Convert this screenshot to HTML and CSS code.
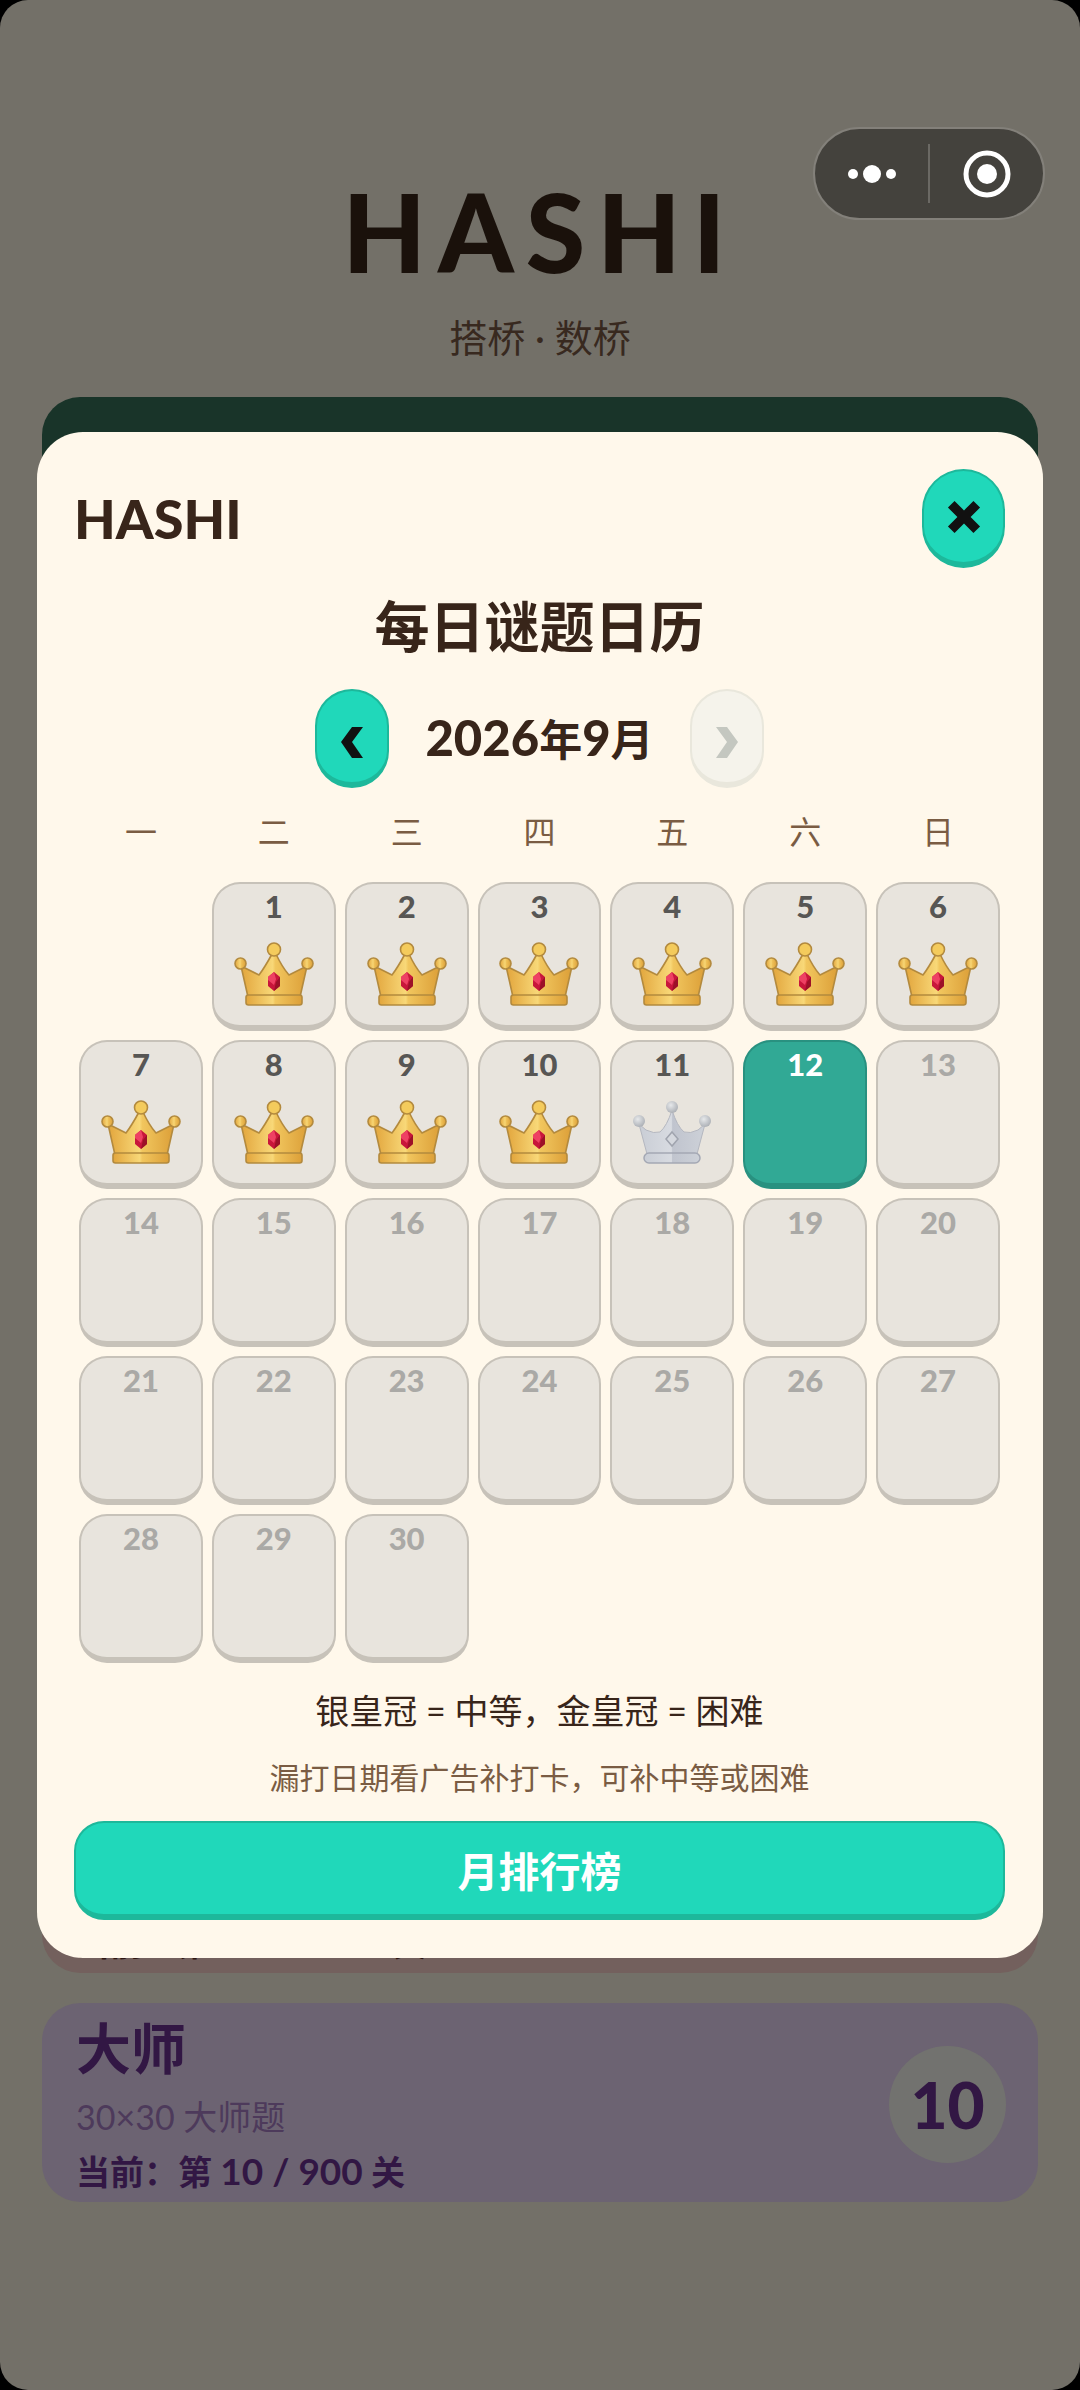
FILE: index.html
```
<!DOCTYPE html>
<html lang="zh-CN">
<head>
	<meta charset="UTF-8">
	<title>HASHI</title>
	<link rel="stylesheet" href="styles.css">
</head>
<body>
	<svg class="defs" width="0" height="0" aria-hidden="true">
		<defs>
			<linearGradient id="gold" x1="0" x2="1" y1="0" y2="0">
				<stop offset="0" stop-color="#e2a53c"/>
				<stop offset="0.48" stop-color="#f8d878"/>
				<stop offset="0.52" stop-color="#f1c65e"/>
				<stop offset="1" stop-color="#dc9f38"/>
			</linearGradient>
			<linearGradient id="silver" x1="0" x2="1" y1="0" y2="0">
				<stop offset="0" stop-color="#c9cdd5"/>
				<stop offset="0.49" stop-color="#d8dbe1"/>
				<stop offset="0.51" stop-color="#c0c4ce"/>
				<stop offset="1" stop-color="#cdd1d8"/>
			</linearGradient>
			<radialGradient id="pearl" cx="0.4" cy="0.35" r="0.7">
				<stop offset="0" stop-color="#e6e8ea"/>
				<stop offset="1" stop-color="#a9adb3"/>
			</radialGradient>
			<symbol id="crown-gold" viewBox="0 0 80 64">
				<g fill="url(#gold)" stroke="#b38a3e" stroke-width="1.6" stroke-linejoin="round">
					<path d="M7 24 L25 33 Q31 25 38 12 L42 12 Q48 25 55 33 L73 24 L66 55 L14 55 Z"/>
					<circle cx="6.5" cy="21.5" r="5.5"/>
					<circle cx="73.5" cy="21.5" r="5.5"/>
					<rect x="12" y="53" width="56" height="10" rx="2.5"/>
				</g>
				<circle cx="40" cy="7.5" r="6.5" fill="#f4cb5c" stroke="#b38a3e" stroke-width="1.6"/>
				<path d="M40 30 L46 35 L46 44 L40 49 L34 44 L34 35 Z" fill="#c8163b"/>
				<path d="M40 30 L42 37 L40 43 L34 38 L34 35 Z" fill="#ee4163"/>
				<path d="M46 35 L46 44 L40 49 L42 40 Z" fill="#9c1128"/>
			</symbol>
			<symbol id="crown-silver" viewBox="0 0 80 64">
				<path d="M7 24 L14 30 Q22 34 28 32 Q35 26 40 10 Q45 26 52 32 Q58 34 66 30 L73 24 L65 54 L15 54 Z" fill="url(#silver)" stroke="#b4b7c0" stroke-width="1"/>
				<rect x="12" y="53" width="56" height="10" rx="5" fill="url(#silver)" stroke="#a4a8b4" stroke-width="1.5"/>
				<circle cx="7" cy="21" r="6" fill="url(#pearl)"/>
				<circle cx="73" cy="21" r="6" fill="url(#pearl)"/>
				<circle cx="40" cy="7" r="6" fill="url(#pearl)"/>
				<path d="M40 32 L46 39 L40 46 L34 39 Z" fill="#d5d8de" stroke="#a0a4ae" stroke-width="1.5"/>
			</symbol>
		</defs>
	</svg>

	<div class="app">
		<div class="capsule">
			<button class="capsule-btn" aria-label="更多">
				<svg width="50" height="20" viewBox="0 0 50 20"><circle cx="6" cy="10" r="5"/><circle cx="25" cy="10" r="9"/><circle cx="44" cy="10" r="5"/></svg>
			</button>
			<button class="capsule-btn" aria-label="关闭小程序">
				<svg width="50" height="50" viewBox="0 0 50 50"><circle class="ring" cx="25" cy="25" r="21"/><circle cx="25" cy="25" r="10"/></svg>
			</button>
		</div>
		<header class="hero">
			<h1>HASHI</h1>
			<p>搭桥 · 数桥</p>
		</header>
		<main class="levels">
			<section class="card daily"></section>
			<section class="card expert">
				<p class="progress">当前：第 <span class="num">131 / 900</span> 关</p>
			</section>
			<section class="card master">
				<div class="info">
					<h2>大师</h2>
					<p class="desc">30×30 大师题</p>
					<p class="progress">当前：第 <span class="num">10 / 900</span> 关</p>
				</div>
				<div class="badge">10</div>
			</section>
		</main>
	</div>

	<div class="overlay">
		<div class="modal" role="dialog" aria-labelledby="title">
			<div class="modal-head">
				<span class="brand">HASHI</span>
				<button class="btn close" aria-label="关闭">
					<svg width="34" height="34" viewBox="0 0 36 36"><path d="M8 1 L18 11 L28 1 L35 8 L25 18 L35 28 L28 35 L18 25 L8 35 L1 28 L11 18 L1 8 Z"/></svg>
				</button>
			</div>
			<h2 id="title" class="title">每日谜题日历</h2>
			<div class="month">
				<button class="btn arrow" aria-label="上个月">
					<svg width="24" height="31" viewBox="0 0 24 31"><path d="M12 0 H23 L12 15 L23 31 H12 L1 15 Z"/></svg>
				</button>
				<span class="month-name">2026<span class="cjk">年</span>9<span class="cjk">月</span></span>
				<button class="btn arrow" aria-label="下个月" disabled>
					<svg width="24" height="31" viewBox="0 0 24 31"><path d="M12 0 H1 L12 15 L1 31 H12 L23 15 Z"/></svg>
				</button>
			</div>
			<div class="week">
				<span>一</span><span>二</span><span>三</span><span>四</span><span>五</span><span>六</span><span>日</span>
			</div>
			<div class="days" id="days"></div>
			<p class="legend">银皇冠 = 中等，金皇冠 = 困难</p>
			<p class="hint">漏打日期看广告补打卡，可补中等或困难</p>
			<button class="btn rank">月排行榜</button>
		</div>
	</div>

	<script>
	// 2026年9月
	var days = document.getElementById('days');
	var today = 12;
	for (var i=1; i<=30; i++){
		var day = document.createElement('button');
		day.className = 'day';
		day.innerHTML = '<span>' + i + '</span>';
		if (i < today){
			// 11号是银皇冠，其余是金皇冠
			var crown = i == 11 ? 'silver' : 'gold';
			day.innerHTML += '<svg class="crown"><use href="#crown-' + crown + '"/></svg>';
		}
		else if (i == today){
			day.className += ' today';
		}
		else {
			day.disabled = true;
		}
		days.appendChild(day);
	}
	</script>
</body>
</html>
```
FILE: styles.css
```
*{
	margin: 0;
	padding: 0;
	box-sizing: border-box;
}
html{
	background: #000;
}
body{
	position: relative;
	font-family: Lato, 'Noto Sans CJK SC', sans-serif;
	color: #38251a;
}
button{
	font-family: inherit;
	border: 0;
	cursor: pointer;
}
.defs{
	position: absolute;
}
.app{
	min-height: 100vh;
	padding: 165px 42px 0;
	background: #737068;
	border-radius: 28px;
}

/* 右上角胶囊 */
.capsule{
	position: absolute;
	top: 127px;
	right: 35px;
	display: flex;
	width: 232px;
	height: 93px;
	padding: 15px 0;
	background: #44423d;
	border: 2px solid #83807a;
	border-radius: 47px;
}
.capsule-btn{
	display: flex;
	flex: 1;
	align-items: center;
	justify-content: center;
	background: none;
}
.capsule-btn + .capsule-btn{
	border-left: 2px solid #6b6964;
}
.capsule-btn svg{
	fill: #fff;
}
.capsule-btn .ring{
	fill: none;
	stroke: #fff;
	stroke-width: 5;
}

.hero{
	text-align: center;
}
.hero h1{
	font-size: 108px;
	font-weight: 900;
	line-height: 132px;
	letter-spacing: 12px;
	color: #1a110b;
}
.hero p{
	margin: 16px 0 36px;
	font-size: 38px;
	line-height: 48px;
	color: #38291f;
}

.levels{
	display: flex;
	flex-direction: column;
	gap: 30px;
}
.card{
	display: flex;
	height: 199px;
	padding: 0 32px 0 34px;
	border-radius: 38px;
}
.daily{
	height: 1347px;
	background: #193429;
}
.expert{
	align-items: flex-end;
	padding-bottom: 5px;
	background: #73605d;
	color: #2c1410;
}
.master{
	align-items: center;
	justify-content: space-between;
	padding-top: 3px;
	background: #6c6372;
	color: #321744;
}
.card h2{
	font-size: 55px;
	font-weight: 700;
	line-height: 72px;
}
.desc{
	margin: 8px 0 4px;
	font-size: 34px;
	line-height: 50px;
	color: #4d3a5b;
}
.progress{
	font-size: 34px;
	font-weight: 700;
	line-height: 50px;
}
.num{
	font-size: 37px;
}
.badge{
	width: 117px;
	height: 117px;
	border-radius: 50%;
	background: #72726f;
	font-size: 64px;
	font-weight: 900;
	line-height: 117px;
	text-align: center;
}

/* 弹窗 */
.overlay{
	position: absolute;
	top: 0;
	right: 0;
	bottom: 0;
	left: 0;
	display: flex;
	align-items: center;
	padding: 0 37px;
}
.modal{
	width: 100%;
	padding: 37px 38px 38px 37px;
	background: #fff8eb;
	border-radius: 46px;
}
.modal-head{
	display: flex;
	align-items: center;
	justify-content: space-between;
}
.brand{
	font-size: 54px;
	font-weight: 900;
}
.btn{
	display: flex;
	align-items: center;
	justify-content: center;
	height: 99px;
	background: #20d8ba;
	border: 2px solid #1db89b;
	border-bottom-width: 6px;
	border-radius: 42px;
}
.close{
	width: 83px;
}
.btn svg{
	fill: #111;
}
.title{
	margin: 22px 0 27px;
	font-size: 55px;
	font-weight: 700;
	line-height: 72px;
	text-align: center;
}
.month{
	display: flex;
	align-items: center;
	justify-content: center;
	gap: 36px;
}
.arrow{
	width: 74px;
	padding-top: 12px;
	border-radius: 38px;
}
.arrow:disabled{
	background: #f5f3eb;
	border-color: #e9e7dc;
}
.arrow:disabled svg{
	fill: #c4c7c0;
}
.month-name{
	font-size: 49px;
	font-weight: 900;
	line-height: 60px;
}
.cjk{
	font-size: 43px;
	font-weight: 700;
}
.week{
	display: grid;
	grid-template-columns: repeat(7, 1fr);
	gap: 9px;
	margin: 22px 5px 28px;
	font-size: 32px;
	line-height: 44px;
	text-align: center;
	color: #7a5c43;
}
.days{
	display: grid;
	grid-template-columns: repeat(7, 1fr);
	gap: 9px;
	margin: 0 5px;
}
.day{
	display: flex;
	flex-direction: column;
	align-items: center;
	height: 149px;
	padding-top: 3px;
	background: #e8e4dd;
	border: 2px solid #c7c2b9;
	border-bottom-width: 6px;
	border-radius: 28px;
	font-size: 31px;
	font-weight: 900;
	line-height: 38px;
	color: #575654;
}
/* 9月1日是星期二 */
.day:first-child{
	grid-column-start: 2;
}
.day:disabled{
	color: #aaa9a6;
}
.today{
	background: #31a995;
	border-color: #299180;
	color: #fff;
}
.crown{
	width: 80px;
	height: 64px;
	margin-top: 17px;
}
.legend{
	margin-top: 23px;
	font-size: 34px;
	line-height: 50px;
	text-align: center;
}
.hint{
	margin: 19px 0 22px;
	font-size: 30px;
	line-height: 44px;
	text-align: center;
	color: #7a5c43;
}
.rank{
	width: 100%;
	border-radius: 30px;
	font-size: 41px;
	font-weight: 700;
	color: #fff;
}
```
